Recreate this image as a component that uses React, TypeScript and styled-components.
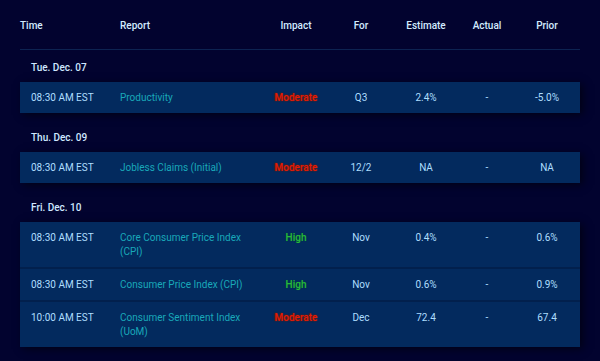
import React from 'react';
import styled, { createGlobalStyle } from 'styled-components';

const GlobalStyle = createGlobalStyle`
  html, body {
    margin: 0;
    padding: 0;
    background: #02032f;
  }
  body {
    font-family: Roboto, "Liberation Sans", Arial, sans-serif;
    font-size: 10px;
  }
`;

const Page = styled.div`
  width: 600px;
  height: 361px;
  padding: 0 20px;
  box-sizing: border-box;
  background: #02032f;
  overflow: hidden;
`;

const columns = '100px 142px 68px 62px 68px 54px 66px';

const HeaderRow = styled.div`
  display: grid;
  grid-template-columns: ${columns};
  align-items: center;
  height: 49px;
  border-bottom: 1px solid #0d2352;
  color: #d2ecff;
  font-weight: 500;
`;

const HeadCell = styled.div<{ $align?: 'left' | 'center' }>`
  text-align: ${p => (p.$align === 'center' ? 'center' : 'left')};
  padding-top: 1px;
`;

const Group = styled.section`
  & + & {
    margin-top: 7px;
  }
`;

const DateLabel = styled.div`
  height: 32px;
  box-sizing: border-box;
  padding: 0 0 9px 11px;
  display: flex;
  align-items: flex-end;
  color: #cfe8ff;
  font-weight: 500;
`;

const Rows = styled.div`
  background: #032a5e;
  box-shadow: 3px 2px 8px rgba(0, 0, 0, 0.55);
`;

const Row = styled.div`
  display: grid;
  grid-template-columns: ${columns};
  align-items: start;
  padding: 9px 0 8px;
  line-height: 14px;
  color: #aedeff;

  & + & {
    border-top: 2px solid #02204d;
  }
`;

const TimeCell = styled.div`
  padding-left: 11px;
`;

const ReportCell = styled.div`
  color: #19a8b9;
  padding-right: 14px;
`;

const Cell = styled.div`
  text-align: center;
`;

const ImpactText = styled.span<{ $level: 'Moderate' | 'High' }>`
  font-weight: 500;
  color: ${p => (p.$level === 'High' ? '#27b83e' : '#e41a0c')};
  text-shadow: ${p =>
    p.$level === 'High'
      ? '0 0 1px #0a5a2a'
      : '0 0 1px #6a1a00, 0 0 2px #7a2a00'};
`;

type Entry = {
  time: string;
  report: string;
  impact: 'Moderate' | 'High';
  period: string;
  estimate: string;
  actual: string;
  prior: string;
};

const groups: { date: string; entries: Entry[] }[] = [
  {
    date: 'Tue. Dec. 07',
    entries: [
      { time: '08:30 AM EST', report: 'Productivity', impact: 'Moderate', period: 'Q3', estimate: '2.4%', actual: '-', prior: '-5.0%' },
    ],
  },
  {
    date: 'Thu. Dec. 09',
    entries: [
      { time: '08:30 AM EST', report: 'Jobless Claims (Initial)', impact: 'Moderate', period: '12/2', estimate: 'NA', actual: '-', prior: 'NA' },
    ],
  },
  {
    date: 'Fri. Dec. 10',
    entries: [
      { time: '08:30 AM EST', report: 'Core Consumer Price Index (CPI)', impact: 'High', period: 'Nov', estimate: '0.4%', actual: '-', prior: '0.6%' },
      { time: '08:30 AM EST', report: 'Consumer Price Index (CPI)', impact: 'High', period: 'Nov', estimate: '0.6%', actual: '-', prior: '0.9%' },
      { time: '10:00 AM EST', report: 'Consumer Sentiment Index (UoM)', impact: 'Moderate', period: 'Dec', estimate: '72.4', actual: '-', prior: '67.4' },
    ],
  },
];

const App = () => {
  return (
    <Page>
      <GlobalStyle />
      <HeaderRow>
        <HeadCell>Time</HeadCell>
        <HeadCell>Report</HeadCell>
        <HeadCell $align="center">Impact</HeadCell>
        <HeadCell $align="center">For</HeadCell>
        <HeadCell $align="center">Estimate</HeadCell>
        <HeadCell $align="center">Actual</HeadCell>
        <HeadCell $align="center">Prior</HeadCell>
      </HeaderRow>

      {groups.map(g => (
        <Group key={g.date}>
          <DateLabel>{g.date}</DateLabel>
          <Rows>
            {g.entries.map(e => (
              <Row key={e.report}>
                <TimeCell>{e.time}</TimeCell>
                <ReportCell>{e.report}</ReportCell>
                <Cell>
                  <ImpactText $level={e.impact}>{e.impact}</ImpactText>
                </Cell>
                <Cell>{e.period}</Cell>
                <Cell>{e.estimate}</Cell>
                <Cell>{e.actual}</Cell>
                <Cell>{e.prior}</Cell>
              </Row>
            ))}
          </Rows>
        </Group>
      ))}
    </Page>
  );
};

export default App;
